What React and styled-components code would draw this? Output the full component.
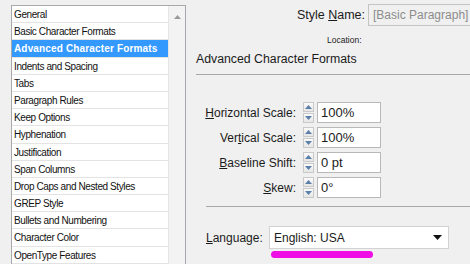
import React from 'react';
import styled, { createGlobalStyle } from 'styled-components';

const GlobalStyle = createGlobalStyle`
    html, body {
        margin: 0;
        padding: 0;
        background: #f0f0f0;
    }
    body {
        width: 470px;
        height: 264px;
        overflow: hidden;
        font-family: "Liberation Sans", Arial, sans-serif;
        color: #1b1b1b;
    }
`;

const sections = [
    'General',
    'Basic Character Formats',
    'Advanced Character Formats',
    'Indents and Spacing',
    'Tabs',
    'Paragraph Rules',
    'Keep Options',
    'Hyphenation',
    'Justification',
    'Span Columns',
    'Drop Caps and Nested Styles',
    'GREP Style',
    'Bullets and Numbering',
    'Character Color',
    'OpenType Features',
];

const fields = [
    { label: 'Horizontal Scale:', key: 'H', pre: '', post: 'orizontal Scale:', value: '100%' },
    { label: 'Vertical Scale:', key: 't', pre: 'Ver', post: 'ical Scale:', value: '100%' },
    { label: 'Baseline Shift:', key: 'B', pre: '', post: 'aseline Shift:', value: '0 pt' },
    { label: 'Skew:', key: 'S', pre: '', post: 'kew:', value: '0°' },
];

function Spinner(){
    return(
        <StyledSpinner>
            <SpinButton>
                <svg width="7" height="4" viewBox="0 0 7 4"><path d="M0 4 L3.5 0 L7 4 Z" fill="#5a7fa8" /></svg>
            </SpinButton>
            <SpinButton>
                <svg width="7" height="4" viewBox="0 0 7 4"><path d="M0 0 L3.5 4 L7 0 Z" fill="#5a7fa8" /></svg>
            </SpinButton>
        </StyledSpinner>
    );
}

function App(){
    return(
        <Page>
            <GlobalStyle />
            <ListPane>
                <ListBox>
                    <Items>
                        {sections.map((s) => (
                            <Item key={s} selected={s === 'Advanced Character Formats'}>{s}</Item>
                        ))}
                    </Items>
                    <ScrollTrack>
                        <svg width="7" height="4" viewBox="0 0 7 4"><path d="M0 4 L3.5 0 L7 4 Z" fill="#9a9a9a" /></svg>
                    </ScrollTrack>
                </ListBox>
            </ListPane>
            <Panel>
                <NameRow>
                    <Label>Style <u>N</u>ame:</Label>
                    <NameInput>[Basic Paragraph]</NameInput>
                </NameRow>
                <Location>Location:</Location>
                <SectionTitle>Advanced Character Formats</SectionTitle>
                <Rule />
                <FieldGrid>
                    {fields.map((f) => (
                        <React.Fragment key={f.label}>
                            <FieldLabel>{f.pre}<u>{f.key}</u>{f.post}</FieldLabel>
                            <Spinner />
                            <ValueBox>{f.value}</ValueBox>
                        </React.Fragment>
                    ))}
                </FieldGrid>
                <Rule indent />
                <LanguageRow>
                    <LangLabel><u>L</u>anguage:</LangLabel>
                    <Dropdown>
                        English: USA
                        <svg width="9" height="5" viewBox="0 0 9 5"><path d="M0 0 L9 0 L4.5 5 Z" fill="#111" /></svg>
                        <Marker />
                    </Dropdown>
                </LanguageRow>
            </Panel>
        </Page>
    );
}

export default App;

const Page = styled.div`
    display: flex;
    width: 470px;
    height: 264px;
`;

const ListPane = styled.div`
    padding: 5px 0 0 11px;
    flex: none;
`;

const ListBox = styled.div`
    display: flex;
    width: 173px;
    height: 270px;
    border: 1px solid #a9a9a9;
    border-right-color: #a6a6b4;
    border-bottom: none;
    background: #fff;
`;

const Items = styled.div`
    flex: 1;
    display: flex;
    flex-direction: column;
`;

const Item = styled.div`
    height: 16.2px;
    line-height: 17.2px;
    border-bottom: 1px solid #e3e3e3;
    padding-left: 2px;
    font-size: 10px;
    white-space: nowrap;
    overflow: hidden;
    letter-spacing: ${(p) => (p.selected ? '0.15px' : '-0.4px')};
    color: ${(p) => (p.selected ? '#fff' : '#111')};
    background: ${(p) => (p.selected ? '#3399ff' : '#fff')};
    font-weight: ${(p) => (p.selected ? 'bold' : 'normal')};
`;

const ScrollTrack = styled.div`
    width: 17px;
    flex: none;
    background: #f3f3f3;
    border-left: 1px solid #e6e6e6;
    display: flex;
    justify-content: center;
    padding-top: 9px;
    box-sizing: border-box;
    align-items: flex-start;
`;

const Panel = styled.div`
    flex: 1;
    position: relative;
    display: flex;
    flex-direction: column;
    padding-left: 10px;
    padding-top: 4px;
    font-size: 12px;
`;

const NameRow = styled.div`
    display: flex;
    align-items: center;
    justify-content: flex-end;
    gap: 3px;
    margin-right: -8px;
    font-size: 12.5px;
`;

const Label = styled.span`
    white-space: nowrap;
`;

const NameInput = styled.div`
    width: 104px;
    height: 20px;
    line-height: 20px;
    border: 1px solid #c4c4c4;
    padding-left: 4px;
    color: #8c8c8c;
    font-size: 12px;
    white-space: nowrap;
`;

const Location = styled.div`
    font-size: 8.5px;
    margin: 9px 0 0 131px;
    color: #222;
`;

const SectionTitle = styled.div`
    margin-top: 7px;
    font-size: 12.3px;
`;

const Rule = styled.div`
    height: 1px;
    background: #a8a8a8;
    margin: 8px 0 0 ${(p) => (p.indent ? '10px' : '0')};
`;

const FieldGrid = styled.div`
    display: grid;
    grid-template-columns: 104px 11px 64px;
    column-gap: 3px;
    row-gap: 4px;
    align-items: center;
    margin-top: 27px;
`;

const FieldLabel = styled.span`
    text-align: right;
    padding-right: 4px;
    white-space: nowrap;
`;

const StyledSpinner = styled.div`
    display: flex;
    flex-direction: column;
    gap: 1px;
    height: 21px;
`;

const SpinButton = styled.div`
    flex: 1;
    border: 1px solid #c9c9c9;
    background: linear-gradient(#fbfbfb, #e6e6e6);
    display: flex;
    align-items: center;
    justify-content: center;
`;

const ValueBox = styled.div`
    height: 19px;
    line-height: 19px;
    border: 1px solid #b8b8b8;
    background: #fff;
    padding-left: 3px;
    font-size: 13px;
`;

const LanguageRow = styled.div`
    display: flex;
    align-items: center;
    margin: 19px 0 0 10px;
`;

const LangLabel = styled.span`
    width: 63px;
    white-space: nowrap;
`;

const Dropdown = styled.div`
    position: relative;
    width: 168px;
    height: 21px;
    border: 1px solid #d2d2d2;
    background: #fff;
    display: flex;
    align-items: center;
    justify-content: space-between;
    padding: 0 6px 0 4px;
    font-size: 12px;
`;

const Marker = styled.div`
    position: absolute;
    left: 1px;
    top: 24px;
    width: 102px;
    height: 7px;
    border-radius: 4px;
    background: #f00ee6;
`;
